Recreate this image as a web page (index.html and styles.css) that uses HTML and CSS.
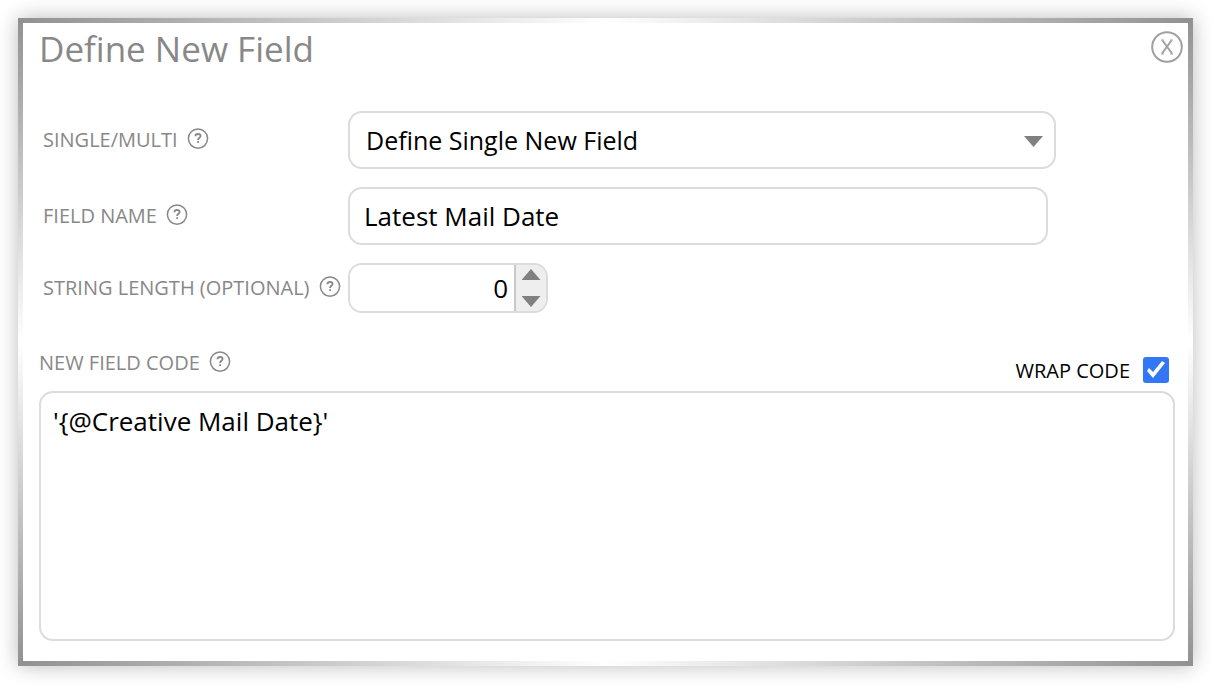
FILE: index.html
```html
<!DOCTYPE html>
<html lang="en">
<head>
  <meta charset="UTF-8">
  <meta name="viewport" content="width=device-width, initial-scale=1">
  <title>Define New Field</title>
  <link rel="stylesheet" href="styles.css">
</head>
<body>
  <svg class="symbols" aria-hidden="true">
    <symbol id="help" viewBox="0 0 22 22">
      <circle cx="11" cy="10.6" r="9.6" />
      <path class="mark" d="M8.4 8.2C8.5 6.7 9.6 6 11 6c1.5 0 2.6.8 2.6 2.1 0 1.7-2.5 1.8-2.5 3.8M11.1 13.2v1.8" />
    </symbol>
  </svg>

  <div class="dialog">
    <form class="panel">
      <div class="title-bar">
        <h1>Define New Field</h1>
        <button type="button" class="close-btn" aria-label="Close">
          <svg viewBox="0 0 32 32">
            <circle cx="16" cy="16" r="14.8" />
            <path d="M11.5 9.5l9.5 13M20.5 9.5L11 22.5" />
            <path class="serif" d="M10 9h3M19 9h3M10 23h3M19 23h3" />
          </svg>
        </button>
      </div>

      <div class="row">
        <div class="label-cell">
          <label for="mode">SINGLE/MULTI</label>
          <svg class="help"><use href="#help" /></svg>
        </div>
        <div class="select-box">
          <select id="mode">
            <option>Define Single New Field</option>
            <option>Define Multiple New Fields</option>
          </select>
        </div>
      </div>

      <div class="row">
        <div class="label-cell">
          <label for="fieldName">FIELD NAME</label>
          <svg class="help"><use href="#help" /></svg>
        </div>
        <input type="text" id="fieldName" class="name-input" value="Latest Mail Date">
      </div>

      <div class="row">
        <div class="label-cell">
          <label for="strLength">STRING LENGTH (OPTIONAL)</label>
          <svg class="help"><use href="#help" /></svg>
        </div>
        <div class="spinner">
          <input type="number" id="strLength" value="0" min="0">
          <div class="spin-buttons">
            <button type="button" class="up" id="spinUp" aria-label="Increase"></button>
            <button type="button" class="down" id="spinDown" aria-label="Decrease"></button>
          </div>
        </div>
      </div>

      <div class="code-header">
        <div class="label-cell">
          <label for="code">NEW FIELD CODE</label>
          <svg class="help"><use href="#help" /></svg>
        </div>
        <div class="wrap-toggle">
          <label for="wrapCode">WRAP CODE</label>
          <input type="checkbox" id="wrapCode" checked>
        </div>
      </div>
      <textarea id="code" spellcheck="false">'{@Creative Mail Date}'</textarea>
    </form>
  </div>

  <script>
    const strLength = document.getElementById('strLength');
    const code = document.getElementById('code');

    document.getElementById('spinUp').onclick = () => strLength.stepUp();
    document.getElementById('spinDown').onclick = () => strLength.stepDown();

    document.getElementById('wrapCode').onchange = (e) => {
      code.style.whiteSpace = e.target.checked ? 'pre-wrap' : 'pre';
    };
  </script>
</body>
</html>
```
FILE: styles.css
```css
* {
  box-sizing: border-box;
}

body {
  margin: 0;
  padding: 18px;
  background: #fff;
  font-family: "Open Sans", "Noto Sans", sans-serif;
  color: #000;
}

.symbols {
  display: none;
}

/* metallic frame: dark corners, bright in the middle of each side */
.dialog {
  padding: 5px;
  background:
    linear-gradient(to right, #919191, #fff 50%, #919191) top / 100% 5px no-repeat,
    linear-gradient(to right, #919191, #fff 50%, #919191) bottom / 100% 5px no-repeat,
    linear-gradient(to bottom, #919191, #fff 50%, #919191);
  box-shadow: 0 0 20px rgba(0, 0, 0, 0.27);
}

.panel {
  background: #fff;
  padding: 0 13px 20px 16px;
}

.title-bar {
  display: flex;
  justify-content: space-between;
  align-items: flex-start;
  height: 88px;
}

h1 {
  margin: 0;
  font-size: 35px;
  line-height: 52px;
  font-weight: 400;
  color: #888;
}

.close-btn {
  width: 32px;
  height: 32px;
  margin: 8px -8px 0 0;
  padding: 0;
  border: none;
  background: none;
  cursor: pointer;
}

.close-btn svg {
  display: block;
  width: 32px;
  height: 32px;
  fill: none;
  stroke: #a0a0a0;
  stroke-width: 2;
}

.close-btn .serif {
  stroke-width: 1;
}

.row {
  display: flex;
  align-items: center;
  margin-bottom: 18px;
}

.row .label-cell {
  flex: 0 0 309px;
  padding-left: 4px;
}

.label-cell {
  display: flex;
  align-items: center;
  gap: 9px;
  font-size: 20px;
  line-height: 28px;
  color: #888;
  white-space: nowrap;
}

.help {
  width: 22px;
  height: 22px;
  margin-bottom: 2px;
  fill: none;
  stroke: #888;
  stroke-width: 1.5;
}

.mark {
  stroke-width: 1.8;
}

select, input, textarea {
  font-family: inherit;
  font-size: 26px;
  color: #000;
  outline: none;
}

select, .name-input, .spinner, textarea {
  border: 2px solid #dcdcdc;
  border-radius: 14px;
  background: #fff;
}

.select-box {
  position: relative;
  flex: 1;
  margin-right: 119px;
}

select {
  display: block;
  width: 100%;
  height: 58px;
  padding: 0 50px 0 16px;
  font-size: 25px;
  appearance: none;
}

.select-box::after {
  content: "";
  position: absolute;
  top: 25px;
  right: 13px;
  width: 19px;
  height: 11px;
  background: #808080;
  clip-path: polygon(0 0, 100% 0, 50% 100%);
  pointer-events: none;
}

.name-input {
  flex: 1;
  min-width: 0;
  height: 58px;
  margin-right: 127px;
  padding: 0 14px;
}

.spinner {
  display: flex;
  width: 200px;
  height: 50px;
  overflow: hidden;
}

.spinner input {
  flex: 1;
  min-width: 0;
  padding: 0 6px;
  border: none;
  text-align: right;
  appearance: textfield;
}

.spinner input::-webkit-inner-spin-button {
  appearance: none;
  margin: 0;
}

.spin-buttons {
  display: flex;
  flex-direction: column;
  width: 32px;
  border-left: 2px solid #c8c8c8;
  background: #eee;
}

.spin-buttons button {
  display: flex;
  flex: 1;
  justify-content: center;
  padding: 4px 0;
  border: none;
  background: none;
  cursor: pointer;
}

.spin-buttons button::before {
  content: "";
  width: 19px;
  height: 11px;
  background: #808080;
}

.up {
  align-items: flex-start;
}

.up::before {
  clip-path: polygon(50% 0, 100% 100%, 0 100%);
}

.down {
  align-items: flex-end;
}

.down::before {
  clip-path: polygon(0 0, 100% 0, 50% 100%);
}

.code-header {
  display: flex;
  justify-content: space-between;
  align-items: flex-start;
  margin-top: 36px;
}

.wrap-toggle {
  display: flex;
  align-items: center;
  gap: 13px;
  height: 42px;
  padding-right: 6px;
  font-size: 20px;
}

.wrap-toggle input {
  width: 26px;
  height: 26px;
  margin: 0;
  border-radius: 3px;
  border: 1px solid #767676;
  appearance: none;
}

.wrap-toggle input:checked {
  border: none;
  background: #3377f6;
}

.wrap-toggle input:checked::before {
  content: "";
  display: block;
  width: 26px;
  height: 26px;
  background: #fff;
  clip-path: polygon(4px 14px, 6px 11px, 10px 15px, 19px 4px, 22px 6px, 10px 21px);
}

textarea {
  display: block;
  width: 100%;
  height: 250px;
  padding: 10px 12px;
  line-height: 36px;
  resize: none;
}
```
